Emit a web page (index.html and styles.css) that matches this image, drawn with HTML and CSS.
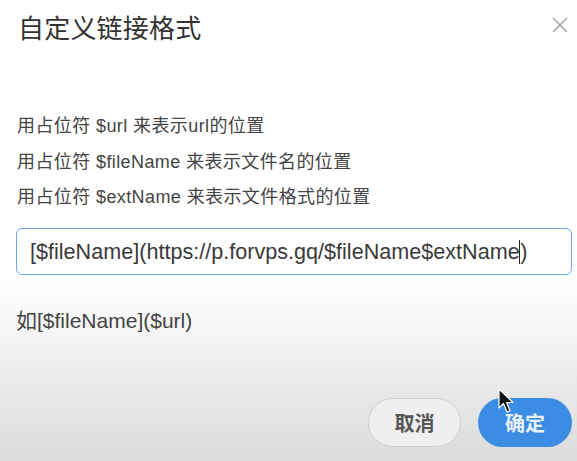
FILE: index.html
```html
<!DOCTYPE html>
<html lang="zh-CN">
<head>
<meta charset="utf-8">
<title>自定义链接格式</title>
<link rel="stylesheet" href="styles.css">
</head>
<body>
<div class="dialog">
  <div class="header">
    <h1 class="title">自定义链接格式</h1>
    <svg class="close" width="16" height="16" viewBox="0 0 16 16" aria-label="关闭">
      <path d="M1.5 1.5 L14.5 14.5 M14.5 1.5 L1.5 14.5" stroke="#a9a9a9" stroke-width="1.6" fill="none" stroke-linecap="round"/>
    </svg>
  </div>
  <div class="hints">
    <p class="hint">用占位符 $url 来表示url的位置</p>
    <p class="hint">用占位符 $fileName 来表示文件名的位置</p>
    <p class="hint">用占位符 $extName 来表示文件格式的位置</p>
  </div>
  <div class="field">[$fileName](https://p.forvps.gq/$fileName$extName<span class="caret"></span>)</div>
  <p class="example">如[$fileName]($url)</p>
  <div class="footer">
    <button class="btn btn-cancel">取消</button>
    <button class="btn btn-ok">确定</button>
    <svg class="cursor" width="18" height="26" viewBox="0 0 18 26">
      <path d="M1 1 L1 20 L5.5 15.5 L9 24 L12 22.7 L8.6 14.5 L15 14.5 Z" fill="#111" stroke="#fff" stroke-width="1.2" stroke-linejoin="round"/>
    </svg>
  </div>
</div>
</body>
</html>
```
FILE: styles.css
```css
html, body {
  margin: 0;
  padding: 0;
  height: 100%;
}
body {
  background: linear-gradient(to bottom, #ffffff 0, #ffffff 275px, #f4f4f4 335px, #e6e6e6 400px, #dcdcdc 100%);
  font-family: "Liberation Sans", "Noto Sans CJK SC", sans-serif;
  color: #444;
  overflow: hidden;
}
.dialog {
  height: 461px;
  box-sizing: border-box;
  padding: 0 5px 0 16px;
  display: flex;
  flex-direction: column;
}
.header {
  display: flex;
  align-items: center;
  justify-content: space-between;
  height: 52px;
  padding-right: 4px;
}
.title {
  margin: 0 0 0 2px;
  font-size: 26px;
  font-weight: normal;
  color: #333;
  letter-spacing: 0.2px;
}
.close {
  margin-top: -3px;
}
.hints {
  margin-top: 65px;
  display: flex;
  flex-direction: column;
  gap: 16.5px;
}
.hint {
  margin: 0 0 0 1px;
  font-size: 18px;
  line-height: 19px;
  letter-spacing: 0.4px;
  color: #444;
}
.field {
  margin-top: 21px;
  height: 47px;
  box-sizing: border-box;
  border: 1.5px solid #6fa7e0;
  border-radius: 6px;
  padding: 0 13px;
  display: flex;
  align-items: center;
  font-size: 21.6px;
  color: #3a3a3a;
  white-space: nowrap;
}
.caret {
  display: inline-block;
  width: 1.5px;
  height: 24px;
  background: #222;
  margin: 0 0 0 -1px;
}
.example {
  margin: 29px 0 0 0;
  font-size: 21px;
  color: #444;
}
.footer {
  position: relative;
  margin-top: auto;
  margin-bottom: 14px;
  display: flex;
  justify-content: flex-end;
  gap: 17px;
}
.btn {
  height: 49px;
  border-radius: 25px;
  font-family: "Liberation Sans", "Noto Sans CJK SC", sans-serif;
  font-size: 20px;
  font-weight: bold;
  cursor: pointer;
}
.btn-cancel {
  width: 93px;
  background: #efefef;
  border: 1.5px solid #cfcfcf;
  color: #555;
}
.btn-ok {
  width: 94px;
  background: #3a8de2;
  border: none;
  color: #eaf2fc;
}
.cursor {
  position: absolute;
  right: 56px;
  top: -10px;
}
```
